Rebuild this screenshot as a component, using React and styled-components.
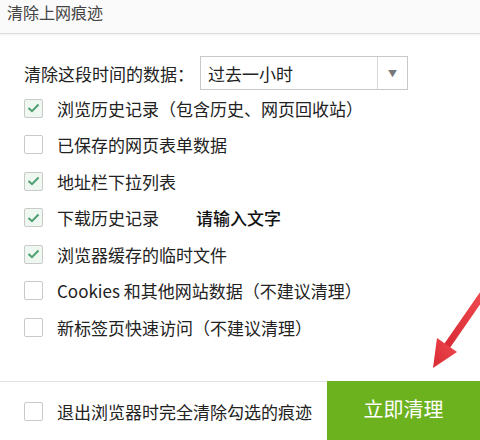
import React from "react";
import styled, { createGlobalStyle } from "styled-components";

const Global = createGlobalStyle`
  html, body { margin: 0; padding: 0; background: #fff; }
  body { font-family: "Noto Sans CJK SC", "Noto Sans", sans-serif; }
  * { box-sizing: border-box; }
`;

const Page = styled.div`
  position: relative;
  width: 480px;
  height: 440px;
  overflow: hidden;
  display: flex;
  flex-direction: column;
  background: #fff;
  color: #222;
`;

const TitleBar = styled.div`
  height: 34px;
  display: flex;
  align-items: flex-start;
  padding: 1px 0 0 7px;
  font-size: 16px;
  line-height: 22px;
  color: #444;
  background: #fafafa;
  border-bottom: 1px solid #dcdcdc;
  box-shadow: 0 1px 2px rgba(0, 0, 0, 0.06);
`;

const Body = styled.div`
  padding: 22px 0 0 24px;
  display: flex;
  flex-direction: column;
`;

const TimeRow = styled.div`
  display: flex;
  align-items: center;
  height: 34px;
  font-size: 17px;
`;

const Label = styled.span`
  width: 176px;
`;

const Select = styled.div`
  width: 208px;
  height: 34px;
  border: 1px solid #c8c8c8;
  display: flex;
  align-items: stretch;
  background: #fff;
`;

const SelectValue = styled.div`
  flex: 1;
  display: flex;
  align-items: center;
  padding-left: 7px;
  font-size: 17px;
`;

const SelectArrow = styled.div`
  width: 30px;
  border-left: 1px solid #d6d6d6;
  display: flex;
  align-items: center;
  justify-content: center;
  color: #777;
  font-size: 9px;
`;

const List = styled.div`
  display: flex;
  flex-direction: column;
`;

const Row = styled.div`
  height: 36.5px;
  display: flex;
  align-items: center;
  font-size: 17px;
`;

const Box = styled.span`
  width: 19px;
  height: 19px;
  border: 1px solid #c9c9c9;
  border-radius: 2px;
  background: ${(p) => (p.$checked ? "#eef8f1" : "#fff")};
  display: inline-flex;
  align-items: center;
  justify-content: center;
  margin-right: 14px;
  flex: none;
`;

const Hint = styled.span`
  margin-left: 37px;
  color: #111;
  font-weight: 500;
`;

const Footer = styled.div`
  margin-top: auto;
  height: 59px;
  display: flex;
`;

const FooterLeft = styled.div`
  flex: 1;
  border-top: 1px solid #e2e2e2;
  display: flex;
  align-items: center;
  padding-left: 24px;
  font-size: 17px;
`;

const CleanButton = styled.button`
  width: 153px;
  border: none;
  background: #6cb11e;
  color: #fff;
  font-family: inherit;
  font-size: 20px;
  padding: 0 0 4px 0;
  cursor: pointer;
`;

const Arrow = styled.svg`
  position: absolute;
  left: 425px;
  top: 292px;
`;

function Check({ checked }) {
  return (
    <Box $checked={checked}>
      {checked && (
        <svg width="13" height="10" viewBox="0 0 13 10">
          <path d="M1.5 5 L5 8.2 L11.5 1.5" fill="none" stroke="#4f9e72" strokeWidth="2" />
        </svg>
      )}
    </Box>
  );
}

const items = [
  { t: "浏览历史记录（包含历史、网页回收站）", c: true },
  { t: "已保存的网页表单数据", c: false },
  { t: "地址栏下拉列表", c: true },
  { t: "下载历史记录", c: true, hint: "请输入文字" },
  { t: "浏览器缓存的临时文件", c: true },
  { t: "Cookies 和其他网站数据（不建议清理）", c: false },
  { t: "新标签页快速访问（不建议清理）", c: false },
];

export default function App() {
  return (
    <>
      <Global />
      <Page>
        <TitleBar>清除上网痕迹</TitleBar>
        <Body>
          <TimeRow>
            <Label>清除这段时间的数据：</Label>
            <Select>
              <SelectValue>过去一小时</SelectValue>
              <SelectArrow>▼</SelectArrow>
            </Select>
          </TimeRow>
          <List>
            {items.map((it) => (
              <Row key={it.t}>
                <Check checked={it.c} />
                <span>{it.t}</span>
                {it.hint && <Hint>{it.hint}</Hint>}
              </Row>
            ))}
          </List>
        </Body>
        <Footer>
          <FooterLeft>
            <Check checked={false} />
            <span>退出浏览器时完全清除勾选的痕迹</span>
          </FooterLeft>
          <CleanButton>立即清理</CleanButton>
        </Footer>
        <Arrow width="60" height="82" viewBox="0 0 60 82">
          <defs>
            <linearGradient id="ag" x1="0" y1="1" x2="1" y2="0">
              <stop offset="0" stopColor="#d92b35" />
              <stop offset="1" stopColor="#ef4a4f" />
            </linearGradient>
          </defs>
          <path d="M58 2 L22 54" stroke="url(#ag)" strokeWidth="7" strokeLinecap="round" />
          <polygon points="8,76 12,46 32,60" fill="url(#ag)" />
        </Arrow>
      </Page>
    </>
  );
}
